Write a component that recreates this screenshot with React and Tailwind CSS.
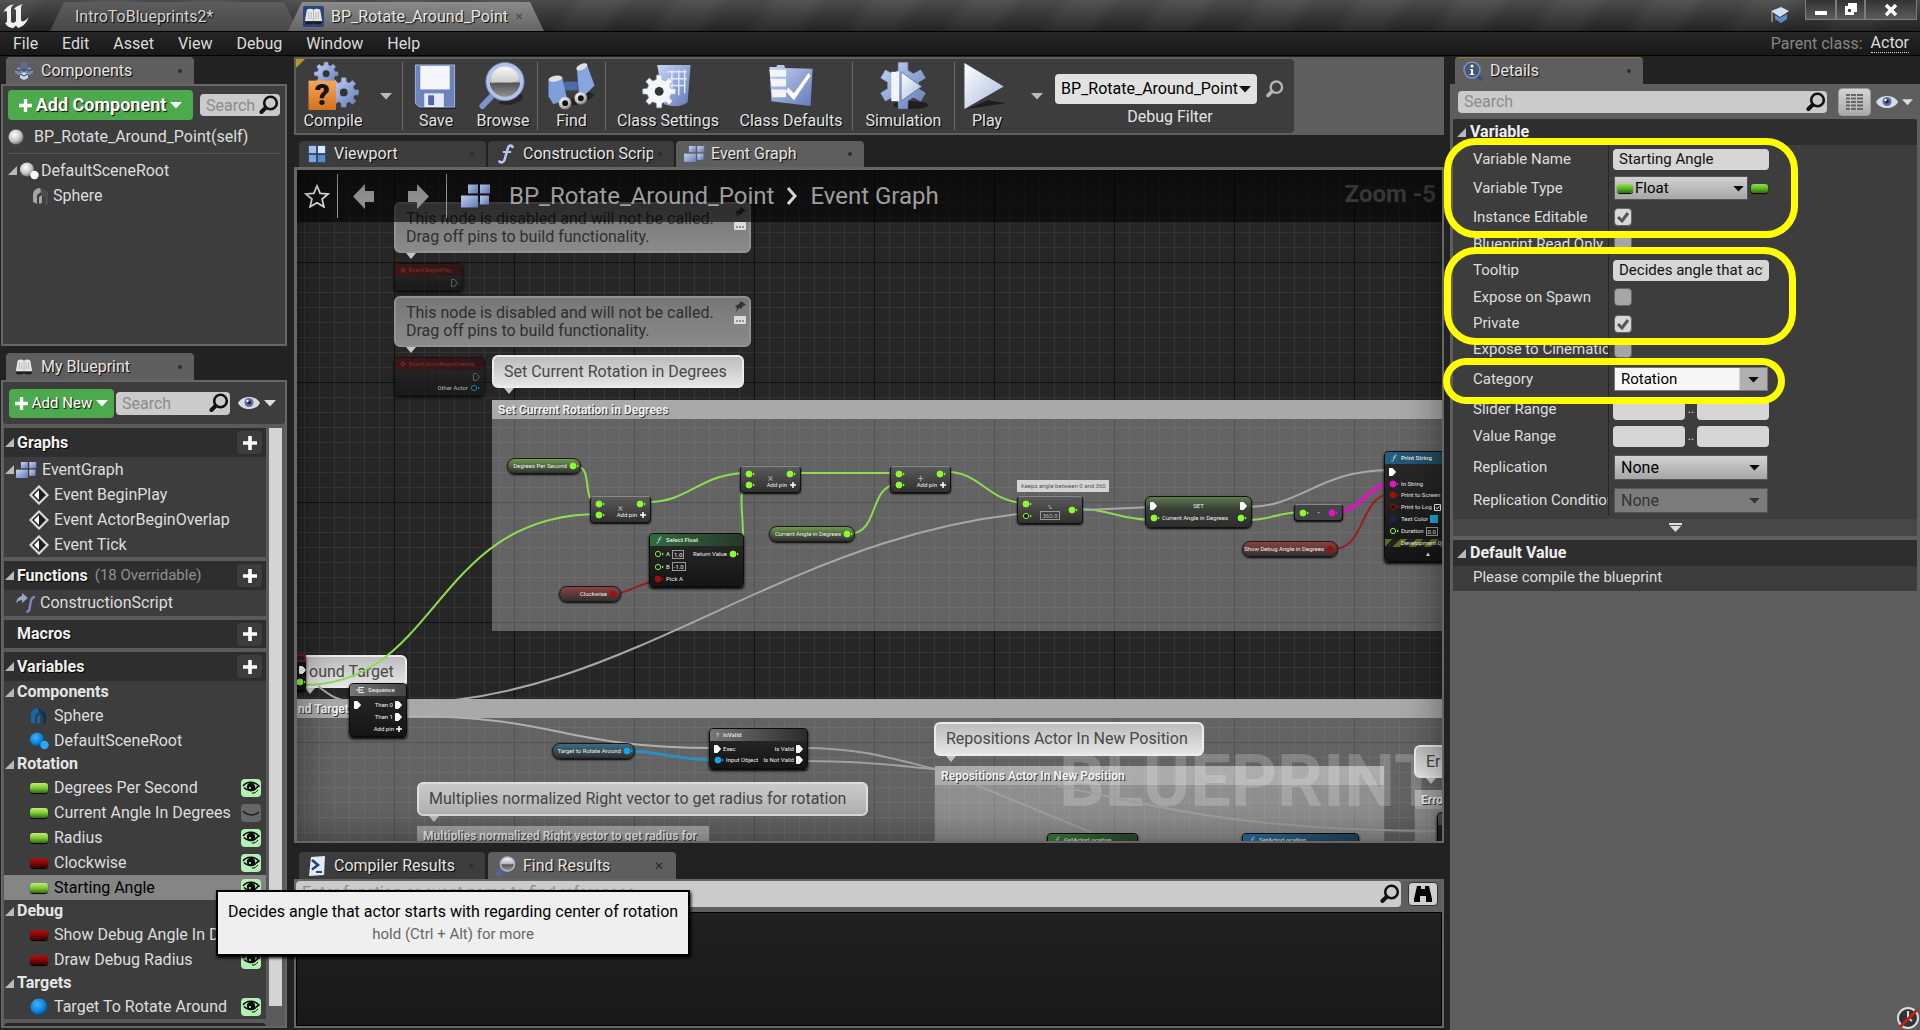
import React from "react";

/* ---------- small glyphs ---------- */

function Magnifier({ className = "size-6", stroke = "#111" }) {
  return (
    <svg viewBox="0 0 22 22" className={className} fill="none" stroke={stroke} aria-hidden="true">
      <circle cx="12.5" cy="9" r="6.3" strokeWidth="2.6" />
      <path d="M7.6 13.8 3.4 18" strokeWidth="4" strokeLinecap="round" />
    </svg>
  );
}

function Caret({ className = "w-3 h-2", fill = "#ddd" }) {
  return (
    <svg viewBox="0 0 12 8" className={className} aria-hidden="true">
      <path d="M0 1h12L6 7.5z" fill={fill} />
    </svg>
  );
}

function Fold() {
  return (
    <svg viewBox="0 0 9 9" className="size-[9px] shrink-0" aria-hidden="true">
      <path d="M9 0v9H0z" fill="#b9b9b9" />
    </svg>
  );
}

function Plus({ className = "size-4", fill = "#fff" }) {
  return (
    <svg viewBox="0 0 14 14" className={className} aria-hidden="true">
      <path d="M5.2 0h3.6v5.2H14v3.6H8.8V14H5.2V8.8H0V5.2h5.2z" fill={fill} />
    </svg>
  );
}

function gearPath(cx, cy, outer, inner, teeth) {
  const step = (Math.PI * 2) / teeth;
  let d = "";
  for (let i = 0; i < teeth; i++) {
    const a = i * step - Math.PI / 2;
    [[-0.3, inner], [-0.19, outer], [0.19, outer], [0.3, inner]].forEach(([k, r], j) => {
      const x = (cx + Math.cos(a + k * step) * r).toFixed(2);
      const y = (cy + Math.sin(a + k * step) * r).toFixed(2);
      d += (i === 0 && j === 0 ? "M" : "L") + x + " " + y;
    });
  }
  return d + "Z";
}

function Gear({ cx, cy, outer, inner, hole, teeth = 8, fill, holeFill = "#333" }) {
  return (
    <g>
      <path d={gearPath(cx, cy, outer, inner, teeth)} fill={fill} stroke="#8fa3d0" strokeWidth=".6" />
      <circle cx={cx} cy={cy} r={hole} fill={holeFill} />
    </g>
  );
}

function Defs() {
  return (
    <svg width="0" height="0" className="absolute" aria-hidden="true">
      <defs>
        <linearGradient id="blue" x1="0" y1="0" x2="1" y2="1">
          <stop offset="0" stopColor="#c6d6f6" />
          <stop offset="1" stopColor="#6279b8" />
        </linearGradient>
        <linearGradient id="pale" x1="0" y1="0" x2="1" y2="1">
          <stop offset="0" stopColor="#ffffff" />
          <stop offset="1" stopColor="#a9b8dc" />
        </linearGradient>
        <linearGradient id="orange" x1="0" y1="0" x2="0" y2="1">
          <stop offset="0" stopColor="#f7a758" />
          <stop offset="1" stopColor="#d4701d" />
        </linearGradient>
        <radialGradient id="ball" cx=".4" cy=".35" r=".7">
          <stop offset="0" stopColor="#ffffff" />
          <stop offset=".6" stopColor="#c4c4c4" />
          <stop offset="1" stopColor="#666" />
        </radialGradient>
        <radialGradient id="cyanBall" cx=".4" cy=".35" r=".7">
          <stop offset="0" stopColor="#3cb4ff" />
          <stop offset=".6" stopColor="#0c84dc" />
          <stop offset="1" stopColor="#06406f" />
        </radialGradient>
        <linearGradient id="lens" x1="0" y1="0" x2="0" y2="1">
          <stop offset="0" stopColor="#fff" />
          <stop offset=".5" stopColor="#b5b5b5" />
          <stop offset=".55" stopColor="#555" />
          <stop offset="1" stopColor="#999" />
        </linearGradient>
      </defs>
    </svg>
  );
}

function Logo() {
  return (
    <svg viewBox="0 0 28 26" className="w-7 h-[26px]" aria-hidden="true">
      <path d="M1 10C3 5 7 2 12 1.500 9.500 3 9 4.500 9 6.500v11c0 1.500.8 2.300 2 2.300s2-.6 3-1.500V8c0-1.500-.7-2-2-2 2-2.500 5-4.200 9-4.800-1.500 1-2 2-2 3.800v11.500c0 1.300.5 1.900 1.500 1.900 1.800 0 4-1.500 6-4.400-1 5-5 9.500-10.500 11l-2-2.500-3 2.700C6 24.500 3.500 21.500 3.200 20c1.300-.2 1.800-1 1.800-2.500V9.800C5 8.500 4.300 8 3.300 8 2.500 8 1.700 8.700 1 10z" fill="#f2f2f2" />
    </svg>
  );
}

function GridIcon({ className = "w-5 h-4" }) {
  return (
    <svg viewBox="0 0 30 23" className={className} aria-hidden="true">
      <rect x="7" y="0" width="10" height="9" fill="url(#blue)" />
      <rect x="19" y="0" width="10" height="9" fill="url(#blue)" />
      <rect x="0" y="11" width="17" height="12" fill="url(#blue)" />
      <rect x="19" y="11" width="9" height="9" fill="url(#blue)" />
    </svg>
  );
}

function ViewportIcon() {
  return (
    <svg viewBox="0 0 20 20" className="size-[18px]" aria-hidden="true">
      <rect x="0" y="0" width="20" height="20" rx="1" fill="#28466e" />
      <rect x="1" y="1" width="8" height="8" fill="#a9bfe4" />
      <rect x="11" y="1" width="8" height="8" fill="#dbe9fb" />
      <rect x="1" y="11" width="8" height="8" fill="#7fa4d6" />
      <rect x="11" y="11" width="8" height="8" fill="#5b88c6" />
    </svg>
  );
}

function FuncIcon({ className = "w-4 h-5", stroke = "#b7c6ef" }) {
  return (
    <svg viewBox="0 0 16 20" className={className} fill="none" stroke={stroke} strokeLinecap="round" aria-hidden="true">
      <path d="M14.500 3c-.8-2-3.600-2-4.500.8L6.500 16c-.8 2.600-3.500 3-5 1.500" strokeWidth="2.600" />
      <path d="M5.500 8h7" strokeWidth="1.800" />
    </svg>
  );
}

function BookIcon({ className = "w-5 h-5", bg = "none" }) {
  return (
    <svg viewBox="0 0 22 22" className={className} aria-hidden="true">
      <rect width="22" height="22" rx="2" fill={bg} />
      <path d="M4 4c2-1.500 5-1.500 7 0 2-1.500 5-1.500 7 0l2 12H2z" fill="#e8e8e8" />
      <path d="M11 4v12M6 6v8M8.500 6v8M13.500 6v8M16 6v8" stroke="#b3b3b3" />
      <path d="M2 16h18l-1 3h-6l-2-1-2 1H3z" fill="#1c1c1c" />
    </svg>
  );
}

function ComponentsIcon() {
  return (
    <svg viewBox="0 0 20 20" className="size-5" aria-hidden="true">
      <rect x="7" y="1" width="6" height="6" rx="1" fill="#5c6f93" />
      <path d="M1 8l4-2 4 2v4l-4 2-4-2zM11 8l4-2 4 2v4l-4 2-4-2z" fill="#7489ae" />
      <path d="M6 13l4-2 4 2v4l-4 2-4-2z" fill="#c9d8ee" />
      <path d="M1 8l4 2 4-2M11 8l4 2 4-2M6 13l4 2 4-2" stroke="#2c3648" fill="none" />
    </svg>
  );
}

function InfoIcon() {
  return (
    <svg viewBox="0 0 20 20" className="size-5" aria-hidden="true">
      <path d="M13 13l6 6" stroke="#35517f" strokeWidth="4" />
      <circle cx="9" cy="9" r="8" fill="#46577a" stroke="#8394b8" strokeWidth="1.500" />
      <circle cx="9" cy="5" r="1.500" fill="#fff" />
      <path d="M7 8h3v5h1.500v1h-5v-1H8V9H7z" fill="#fff" />
    </svg>
  );
}

function EyeIcon() {
  return (
    <svg viewBox="0 0 22 14" className="w-[22px] h-[14px]" aria-hidden="true">
      <path d="M0 7C4-1 18-1 22 7 18 15 4 15 0 7z" fill="#d8dae4" />
      <circle cx="11" cy="6.500" r="4.500" fill="#5a6ea6" />
      <circle cx="11" cy="6.500" r="2" fill="#1c2748" />
      <circle cx="9.500" cy="5" r="1.200" fill="#fff" />
    </svg>
  );
}

function LensIcon() {
  return (
    <svg viewBox="0 0 20 20" className="size-5" aria-hidden="true">
      <path d="M6 14l-4 4" stroke="#54679c" strokeWidth="4" strokeLinecap="round" />
      <circle cx="11.500" cy="8" r="7" fill="url(#lens)" stroke="#a8b6d6" strokeWidth="1.600" />
    </svg>
  );
}

function ConsoleIcon() {
  return (
    <svg viewBox="0 0 18 20" className="w-[18px] h-5" aria-hidden="true">
      <path d="M3 1l14-1-1 19-15 1z" fill="#e2ebfa" />
      <path d="M4 4l6 5-6 4.500" stroke="#23457f" strokeWidth="2.600" fill="none" />
      <path d="M8 16h6" stroke="#23457f" strokeWidth="2" />
    </svg>
  );
}

function HouseIcon({ fill = "#a5a5a5", dark = "#4b4b4b" }) {
  return (
    <svg viewBox="0 0 18 18" className="size-[18px]" aria-hidden="true">
      <path d="M1 8c0-4 3-7 7-7l8 5v10l-3 2V9L9 5 5 8v9l-4-2z" fill={fill} />
      <path d="M8 1l8 5v10l-3 2V9L9 5z" fill={dark} />
      <path d="M7 10l3-2v8l-3 1z" fill={fill} />
    </svg>
  );
}

function SceneRootIcon({ ball = "url(#ball)", small = "#fff" }) {
  return (
    <svg viewBox="0 0 20 18" className="w-5 h-[18px]" aria-hidden="true">
      <circle cx="8" cy="7.500" r="7" fill={ball} />
      <circle cx="15.500" cy="13" r="4.200" fill={small} />
    </svg>
  );
}

function EventIcon() {
  return (
    <svg viewBox="0 0 20 20" className="size-5" aria-hidden="true">
      <path d="M10 1.500 18.500 10 10 18.500 1.500 10z" fill="#1d1d1d" stroke="#d9d9d9" strokeWidth="2.200" />
      <path d="M10 5 5 10l5 5z" fill="#fff" />
    </svg>
  );
}

function OverrideIcon() {
  return (
    <svg viewBox="0 0 20 20" className="size-5" aria-hidden="true">
      <path d="M0 10c1-5 4-7 6-7V0l6 5-6 5V7C4 7 2 8 0 10z" fill="#9aa6c6" />
      <path d="M19 4c-3 0-4 2-4.500 6l-1 6c-.3 2-1.500 3-3 2.500" stroke="#7f83c9" strokeWidth="2.400" fill="none" />
    </svg>
  );
}

function Pill({ tone, className = "w-[18px] h-[10px]" }) {
  const tones = {
    green: "from-[#c0f070] via-[#7fc832] to-[#2f6d0c]",
    red: "from-[#a51414] via-[#8a0505] to-[#3a0000]",
    float: "from-[#8fe04a] via-[#5cb822] to-[#2c7010]",
  };
  return <span className={`block shrink-0 rounded-[3px] bg-linear-to-b shadow-[0_1px_1px_#000] ${tones[tone]} ${className}`} />;
}

function EyeBadge({ open }) {
  return (
    <button aria-label={open ? "Visible" : "Hidden"} aria-pressed={open} className={`flex h-[18px] w-5 shrink-0 items-center justify-center rounded-sm ${open ? "bg-[#b4f0b4]" : "bg-[#666]"}`}>
      <svg viewBox="0 0 18 14" className="h-[14px] w-[18px]" aria-hidden="true">
        {open ? (
          <>
            <path d="M1 5C5 0 12 0 17 5c-1 .3-1.500 1-2.500 1.800C11 11 5 10 2 6.500" fill="none" stroke="#0a0a0a" strokeWidth="1.500" />
            <circle cx="9" cy="6" r="4.200" fill="#0a0a0a" />
            <circle cx="8" cy="7" r="1.100" fill="#b4f0b4" />
            <path d="M10 12c3 .5 4-1 6-3" stroke="#0a0a0a" fill="none" />
          </>
        ) : (
          <path d="M1 5c4 5 12 5 16 1" stroke="#222" strokeWidth="1.600" fill="none" />
        )}
      </svg>
    </button>
  );
}

/* ---------- toolbar pictures ---------- */

const ToolArt = {
  compile: (
    <>
      <Gear cx={18} cy={12} outer={12} inner={9} hole={3.5} fill="url(#blue)" />
      <Gear cx={36} cy={31} outer={15} inner={11} hole={4} fill="url(#blue)" />
      <rect x="0" y="19" width="28" height="30" fill="url(#orange)" />
      <text x="14" y="44" textAnchor="middle" fontSize="30" fontWeight="900" fontFamily="Roboto, sans-serif" fill="#111">?</text>
    </>
  ),
  save: (
    <>
      <path d="M6 46h38l2 2H10z" fill="#111" opacity=".6" />
      <path d="M4 3h40v43H8l-4-4z" fill="#6d83bd" stroke="#9db0de" />
      <rect x="9" y="4" width="30" height="24" fill="#f4f6fb" />
      <rect x="13" y="32" width="20" height="14" fill="#e6ebf5" />
      <rect x="17" y="34" width="6" height="10" fill="#536aa8" />
    </>
  ),
  browse: (
    <>
      <path d="M20 42c10 4 22 0 26-6l-6-8z" fill="#111" opacity=".5" />
      <path d="M17 31 4 45" stroke="#7c93cd" strokeWidth="6" strokeLinecap="round" />
      <circle cx="27" cy="20" r="17.500" fill="url(#lens)" stroke="#b3c3e8" strokeWidth="4" />
      <circle cx="27" cy="20" r="19.500" fill="none" stroke="#6c81b6" strokeWidth="1" />
      <path d="M13 22a14 14 0 0 1 28-4c-8 6-20 1-28 4z" fill="#fff" opacity=".35" />
    </>
  ),
  find: (
    <>
      <path d="M14 42c10 6 26 0 34-8l-6-4z" fill="#111" opacity=".6" />
      <path d="M17 20h14v9H17z" fill="#4b6aa6" />
      <path d="M1 18l14-3 5 23-14 5-5-8z" fill="#7f9fdb" />
      <path d="M30 7l10-5 8 22-10 10-6-2z" fill="#86a6e0" />
      <ellipse cx="8" cy="17" rx="7" ry="3" fill="#e3e0e4" transform="rotate(-10 8 17)" />
      <ellipse cx="35" cy="5" rx="6" ry="3" fill="#e3e0e4" transform="rotate(-25 35 5)" />
      <circle cx="18" cy="42" r="6.500" fill="url(#ball)" />
      <circle cx="34" cy="37" r="6.500" fill="url(#ball)" />
      <circle cx="18" cy="42" r="3" fill="#111" />
      <circle cx="34" cy="37" r="3" fill="#111" />
    </>
  ),
  settings: (
    <>
      <path d="M14 3h34l-3 38c-6 5-16 5-24 2z" fill="url(#blue)" />
      <path d="M24 10h20M24 17h20M23 24h20M29 8v24M36 8v26M42 8v24" stroke="#dfe8fa" strokeWidth="1.500" />
      <Gear cx={16} cy={30} outer={17} inner={12.5} hole={4.5} fill="#f5f6fa" />
    </>
  ),
  defaults: (
    <>
      <path d="M3 5h7l1-2h7l1 3 28 1-2 38L5 40z" fill="url(#blue)" />
      <path d="M3 8h17v7H4zM4 17h16v8H5zM5 28h15v8H6z" fill="#f1f3f8" />
      <path d="M22 26l6 6L43 11l2 3-17 25-8-9z" fill="#fff" />
    </>
  ),
  simulation: (
    <>
      <ellipse cx="32" cy="44" rx="18" ry="4" fill="#111" opacity=".7" />
      <Gear cx={24} cy={24} outer={24} inner={16} hole={1} teeth={6} fill="url(#blue)" />
      <path d="M12 10h8v30h-8z" fill="#f1f4fb" />
      <path d="M22 10l21 15-21 15z" fill="url(#pale)" stroke="#5f76b0" />
    </>
  ),
  play: (
    <>
      <path d="M4 48l22-9 18 3z" fill="#111" opacity=".7" />
      <path d="M2 1l40 24L2 48z" fill="url(#pale)" />
    </>
  ),
};

function ToolButton({ art, label, className }) {
  return (
    <button className={`flex h-full flex-col items-center pt-[3px] ${className}`}>
      <svg viewBox="0 0 50 50" className="h-[49px] w-[50px] overflow-visible" aria-hidden="true">{ToolArt[art]}</svg>
      <span className="whitespace-nowrap leading-5 [text-shadow:1px_1px_0_#000]">{label}</span>
    </button>
  );
}

function Rule() {
  return <span className="my-[3px] w-px shrink-0 bg-[#6a6a6a]" />;
}

/* ---------- panels ---------- */

function Tab({ icon, label, active = true, close, h = "h-[27px]", className }) {
  return (
    <button role="tab" aria-selected={active} className={`flex min-w-0 items-center gap-[5px] rounded-t pl-1.5 pr-3 text-[#e6e6e6] ${h} ${active ? "bg-[#5e5e5e]" : "bg-[#3c3c3c]"} ${className}`}>
      <span className="flex w-6 shrink-0 justify-center">{icon}</span>
      <span className="flex-1 overflow-hidden whitespace-nowrap text-left [text-shadow:1px_1px_1px_#000]">{label}</span>
      {close ? <span className="text-xs text-[#2b2b2b]">✕</span> : <span className="size-1 shrink-0 rounded-full bg-[#2e2e2e]" />}
    </button>
  );
}

function SearchBox({ id, label = "Search", className, inputClass = "" }) {
  return (
    <div className={`flex items-center rounded-sm bg-[#cbcbcb] ${className}`}>
      <input id={id} aria-label={label} placeholder={label} className={`h-full w-0 min-w-0 flex-1 bg-transparent pl-1.5 text-[#222] outline-none placeholder:text-[#8c8c8c] ${inputClass}`} />
      <Magnifier className="size-[22px] shrink-0" />
    </div>
  );
}

function ComponentsPanel() {
  return (
    <section className="flex flex-col">
      <div role="tablist" className="flex pl-1.5">
        <Tab icon={<ComponentsIcon />} label="Components" className="w-[188px]" />
      </div>
      <div className="ml-px mr-px h-[262px] border-2 border-[#666] bg-[#3d3d3d] px-[5px] pt-1">
        <div className="flex items-center gap-[7px]">
          <button className="flex h-[30px] w-[185px] items-center justify-center gap-1 rounded-sm bg-[#4caa4c] text-lg font-bold text-white [text-shadow:1px_1px_1px_#000]">
            <Plus className="size-[13px]" />Add Component<Caret className="h-2 w-3" fill="#fff" />
          </button>
          <SearchBox id="component-search" className="h-[22px] w-20" />
        </div>
        <div className="mt-[5px] flex h-6 items-center gap-2.5">
          <svg viewBox="0 0 16 16" className="size-4" aria-hidden="true"><circle cx="8" cy="8" r="7.500" fill="url(#ball)" /></svg>
          BP_Rotate_Around_Point(self)
        </div>
        <hr className="my-1 border-[#555]" />
        <div className="flex h-[25px] items-center gap-[2px]"><Fold /><SceneRootIcon />DefaultSceneRoot</div>
        <div className="flex h-[25px] items-center gap-[3px] pl-6"><HouseIcon />Sphere</div>
      </div>
    </section>
  );
}

function GroupHeader({ title, note, fold = true, h = "h-[29px]" }) {
  return (
    <div className={`flex shrink-0 items-center gap-[3px] bg-[#2e2e2e] pl-px pr-1 text-[#f0f0f0] ${h}`}>
      {fold ? <Fold /> : <span className="w-[9px]" />}
      <span className="font-bold [text-shadow:1px_1px_1px_#000]">{title}</span>
      {note && <span className="ml-1 text-[15px] text-[#909090]">{note}</span>}
      <button aria-label={`Add to ${title}`} className="ml-auto flex h-[23px] w-[25px] items-center justify-center rounded-sm bg-[#3d3d3d]"><Plus className="size-[14px]" /></button>
    </div>
  );
}

function VarGroup({ title }) {
  return (
    <div className="flex h-[22px] items-center gap-[3px] pl-px">
      <Fold /><span className="font-bold text-[#e6e6e6]">{title}</span>
    </div>
  );
}

function Leaf({ icon, label, eye, selected }) {
  return (
    <div className={`flex h-[25px] items-center gap-[5px] pl-[25px] pr-[5px] ${selected ? "bg-[#858585] text-black" : ""}`}>
      <span className="flex w-5 shrink-0 justify-center">{icon}</span>
      <span className="flex-1 overflow-hidden whitespace-nowrap">{label}</span>
      {eye && <EyeBadge open={eye === "open"} />}
    </div>
  );
}

function MyBlueprintPanel() {
  return (
    <section className="mt-[7px] flex min-h-0 flex-1 flex-col pb-[2px]">
      <div role="tablist" className="flex pl-1.5">
        <Tab icon={<BookIcon />} label="My Blueprint" className="w-[188px]" />
      </div>
      <div className="ml-px mr-px flex min-h-0 flex-1 flex-col border-2 border-[#666] bg-[#5a5a5a]">
        <div className="flex h-[42px] shrink-0 items-center rounded-b bg-[#3d3d3d] pl-1.5">
          <button className="flex h-[29px] w-[105px] items-center justify-center gap-1 rounded-sm bg-[#4caa4c] text-[15px] text-white [text-shadow:1px_1px_1px_#000]">
            <Plus className="size-[13px]" />Add New<Caret className="h-2 w-3" fill="#fff" />
          </button>
          <SearchBox id="blueprint-search" className="ml-[2px] h-[23px] w-[114px]" />
          <button aria-label="View options" className="ml-2 flex items-center gap-1"><EyeIcon /><Caret className="h-2 w-3" /></button>
        </div>
        <div className="mt-1 flex min-h-0 flex-1 gap-[3px] pr-[3px]">
          <div className="flex min-w-0 flex-1 flex-col gap-1 overflow-hidden pl-px">
            <div className="bg-[#3d3d3d]">
              <GroupHeader title="Graphs" />
              <div className="flex h-[25px] items-center gap-[2px] pl-px"><Fold /><GridIcon className="h-4 w-[21px]" /><span className="ml-[3px]">EventGraph</span></div>
              <Leaf icon={<EventIcon />} label="Event BeginPlay" />
              <Leaf icon={<EventIcon />} label="Event ActorBeginOverlap" />
              <Leaf icon={<EventIcon />} label="Event Tick" />
            </div>
            <div className="bg-[#3d3d3d]">
              <GroupHeader title="Functions" note="(18 Overridable)" />
              <div className="flex h-[26px] items-center gap-1 pl-3"><OverrideIcon />ConstructionScript</div>
            </div>
            <GroupHeader title="Macros" fold={false} h="h-7" />
            <div className="bg-[#3d3d3d]">
              <GroupHeader title="Variables" />
              <VarGroup title="Components" />
              <Leaf icon={<HouseIcon fill="#0f6ba5" dark="#0b3454" />} label="Sphere" />
              <Leaf icon={<SceneRootIcon ball="url(#cyanBall)" small="#2aa8f5" />} label="DefaultSceneRoot" />
              <VarGroup title="Rotation" />
              <Leaf icon={<Pill tone="green" />} label="Degrees Per Second" eye="open" />
              <Leaf icon={<Pill tone="green" />} label="Current Angle In Degrees" eye="closed" />
              <Leaf icon={<Pill tone="green" />} label="Radius" eye="open" />
              <Leaf icon={<Pill tone="red" />} label="Clockwise" eye="open" />
              <Leaf icon={<Pill tone="green" />} label="Starting Angle" eye="open" selected />
              <VarGroup title="Debug" />
              <Leaf icon={<Pill tone="red" />} label="Show Debug Angle In Degrees" eye="open" />
              <Leaf icon={<Pill tone="red" />} label="Draw Debug Radius" eye="open" />
              <VarGroup title="Targets" />
              <Leaf icon={<svg viewBox="0 0 18 18" className="size-[18px]" aria-hidden="true"><circle cx="9" cy="9" r="8.500" fill="url(#cyanBall)" /></svg>} label="Target To Rotate Around" eye="open" />
            </div>
            <div className="h-[6px] shrink-0 rounded-t bg-[#262626]" />
          </div>
          <div className="mb-[20px] w-[13px] bg-[#d4d4d4]" />
        </div>
      </div>
    </section>
  );
}

function Toolbar() {
  return (
    <div className="flex h-[78px] border-2 border-r-0 border-[#5e5e5e] bg-[#5e5e5e]">
      <div className="flex rounded-r bg-[#3d3d3d] pr-[9px] text-[#e4e4e4]">
        <div className="relative flex">
          <svg viewBox="0 0 10 10" className="absolute left-0 top-0 size-[9px]" aria-hidden="true"><path d="M0 0h10L0 10z" fill="#b8962c" /></svg>
          <ToolButton art="compile" label="Compile" className="w-[74px]" />
          <button aria-label="Compile options" className="flex w-8 items-center justify-center"><Caret className="h-2 w-3" fill="#bbb" /></button>
        </div>
        <Rule />
        <ToolButton art="save" label="Save" className="w-[66px]" />
        <ToolButton art="browse" label="Browse" className="w-[68px]" />
        <Rule />
        <ToolButton art="find" label="Find" className="w-[67px]" />
        <Rule />
        <ToolButton art="settings" label="Class Settings" className="w-[124px]" />
        <ToolButton art="defaults" label="Class Defaults" className="w-[122px]" />
        <Rule />
        <ToolButton art="simulation" label="Simulation" className="w-[101px]" />
        <Rule />
        <ToolButton art="play" label="Play" className="w-[64px]" />
        <button aria-label="Play options" className="flex w-[36px] items-center justify-center"><Caret className="h-2 w-3" fill="#bbb" /></button>
        <div className="flex flex-col items-center pt-[15px]">
          <div className="flex items-center gap-2">
            <span className="relative flex items-center">
              <select id="debug-filter" className="h-[30px] w-[202px] appearance-none rounded-sm bg-[#e2e2e2] pl-1.5 text-black">
                <option>BP_Rotate_Around_Point</option>
              </select>
              <Caret className="pointer-events-none absolute right-1.5 h-2 w-3" fill="#111" />
            </span>
            <button aria-label="Locate"><Magnifier className="size-5" stroke="#b5b5b5" /></button>
          </div>
          <label htmlFor="debug-filter" className="mt-[3px] leading-5">Debug Filter</label>
        </div>
      </div>
    </div>
  );
}

/* ---------- graph ---------- */

const pinFill = { green: "#8dfb2f", red: "#a00f0f", pink: "#e312c4", blue: "#15a4e8", dark: "#1b2450" };

function Pin({ tone = "green", hollow }) {
  return (
    <svg viewBox="0 0 10 8" className="h-2 w-2.5 shrink-0" aria-hidden="true">
      <circle cx="4" cy="4" r={hollow ? 2.6 : 3} fill={hollow ? "#111" : pinFill[tone]} stroke={pinFill[tone]} />
      <path d="M8 2.600 9.800 4 8 5.400z" fill={pinFill[tone]} />
    </svg>
  );
}

function Exec({ hollow }) {
  return (
    <svg viewBox="0 0 7 8" className="h-2 w-[7px] shrink-0" aria-hidden="true">
      <path d="M.5.500h3L6.500 4 3.500 7.500h-3z" fill={hollow ? "none" : "#fff"} stroke={hollow ? "#777" : "#fff"} />
    </svg>
  );
}

function VarNode({ label, tone = "green", glow, className }) {
  return (
    <div className={`absolute flex h-4 items-center justify-end gap-[2px] whitespace-nowrap rounded-lg border border-[#1a1a1a] bg-linear-to-b pr-px shadow-[0_1px_2px_#000] ${glow} to-[#303030] ${className}`}>
      {label}<Pin tone={tone} />
    </div>
  );
}

function MathNode({ sign, className }) {
  return (
    <div className={`absolute flex h-[27px] w-[61px] flex-col justify-between rounded border border-[#111] border-t-[#888] bg-linear-to-b from-[#5a5a5a] to-[#303030] px-1 py-[3px] shadow-[0_1px_2px_#000] ${className}`}>
      <div className="flex justify-between"><Pin /><span className="-mb-1 pt-1 text-[10px] leading-[10px] text-[#aaa]">{sign}</span><Pin /></div>
      <div className="flex items-center justify-between"><Pin /><span className="flex items-center gap-[3px] whitespace-nowrap">Add pin<Plus className="size-1.5" /></span></div>
    </div>
  );
}

function Card({ title, icon, head, className, children }) {
  return (
    <div className={`absolute flex flex-col overflow-hidden rounded border border-[#0c0c0c] bg-linear-to-b from-[#2b2b2b] to-[#151515] shadow-[0_2px_3px_#000] ${className}`}>
      <div className={`flex h-3 shrink-0 items-center gap-1 bg-linear-to-r px-1.5 font-bold text-[#ddd] ${head}`}>{icon}{title}</div>
      <div className="flex flex-1 flex-col justify-evenly px-1">{children}</div>
    </div>
  );
}

function TinyFunc() {
  return <FuncIcon className="h-2 w-1.5" />;
}

function PinRow({ left, right }) {
  return (
    <div className="flex items-center justify-between whitespace-nowrap">
      <span className="flex items-center gap-[2px]">{left}</span>
      <span className="flex items-center gap-[2px]">{right}</span>
    </div>
  );
}

function Value({ children }) {
  return <span className="border border-[#999] px-px leading-[7px]">{children}</span>;
}

function Bubble({ className, tone = "from-[#c9c9c9] to-[#b5b5b5] text-[#444] border-[#dedede]", children }) {
  return (
    <div className={`absolute whitespace-nowrap rounded-md border-2 bg-linear-to-b px-2.5 text-base ${tone} ${className}`}>
      {children}
      <svg viewBox="0 0 10 6" className="absolute left-2.5 top-full mt-0.5 h-1.5 w-2.5" aria-hidden="true"><path d="M0 0h10L5 6z" fill="#c4c4c4" /></svg>
    </div>
  );
}

function DisabledNote({ className }) {
  return (
    <Bubble tone="from-[#777] to-[#8a8a8a] border-[#929292] text-[#2f2f2f]" className={`h-[51px] w-[357px] pt-[6px] leading-[18px] ${className}`}>
      This node is disabled and will not be called.<br />Drag off pins to build functionality.
      <svg viewBox="0 0 12 26" className="absolute right-[3px] top-[3px] h-[26px] w-3" aria-hidden="true">
        <path d="M7 0l5 4-3 1-2 3-2-1-3 4 1-4-2-2 4-2z" fill="#333" />
        <rect x="0" y="15" width="12" height="8" rx="1" fill="#ddd" />
        <path d="M2 20h2M5 20h2M8 20h2" stroke="#444" />
      </svg>
    </Bubble>
  );
}

const brightBubble = "from-[#bdbdbd] to-[#e6e6e6] border-[#ececec] text-[#484848]";

function Comment({ title, className, head = "bg-[#a9a9a9]", pad = "pl-1.5" }) {
  return (
    <div className={`absolute bg-white/28 ${className}`}>
      <div className={`h-[19px] overflow-hidden whitespace-nowrap text-xs font-bold leading-5 text-[#f0f0f0] [text-shadow:1px_1px_0_#333] ${pad} ${head}`}>{title}</div>
    </div>
  );
}

function Wires() {
  const wire = [
    ["M575 466C595 466 580 503 598 503", "#8fdc50", 2],
    ["M297 685C440 690 430 515 598 514", "#8fdc50", 2],
    ["M648 502C690 502 700 473 748 473", "#8fdc50", 2],
    ["M741 552C748 530 734 488 748 484", "#8fdc50", 2],
    ["M798 473H898", "#8fdc50", 2],
    ["M850 534C880 532 868 486 898 484", "#8fdc50", 2],
    ["M948 472C980 472 990 503 1025 503", "#8fdc50", 2],
    ["M1080 509C1110 509 1120 520 1154 520", "#8fdc50", 2],
    ["M1248 520C1270 520 1280 512 1303 512", "#8fdc50", 2],
    ["M617 594C632 590 640 584 658 580", "#9b1c24", 2],
    ["M1334 549C1365 549 1360 496 1390 494", "#9b1c24", 2],
    ["M1339 512C1360 510 1370 485 1390 483", "#d01cb4", 4],
    ["M403 703C640 703 800 512 1083 510L1154 507", "#a8a8a8", 2],
    ["M1248 507C1300 507 1320 470 1390 470", "#a8a8a8", 2],
    ["M403 716C560 716 560 748 715 748", "#b0b0b0", 2],
    ["M803 748C860 748 890 758 935 769", "#a0a0a0", 2],
    ["M803 761C860 761 890 765 935 769", "#a0a0a0", 2],
    ["M976 785L1100 836", "#a0a0a0", 2],
    ["M1058 786C1180 812 1260 831 1441 831", "#a0a0a0", 2],
    ["M632 751C660 752 680 760 715 760", "#2a8fc4", 3],
    ["M318 686C330 696 340 702 356 702", "#a8a8a8", 2],
  ];
  return (
    <svg className="absolute inset-0 size-full" fill="none" aria-hidden="true">
      <g transform="translate(-297 -170)">
        {wire.map(([d, stroke, w]) => <path key={d} d={d} stroke={stroke} strokeWidth={w} />)}
      </g>
    </svg>
  );
}

function GraphCanvas() {
  return (
    <div className="relative flex-1 overflow-hidden border-2 border-l-[3px] border-t-[3px] border-[#666] bg-[#262626] text-[6px] leading-none text-[#eee]">
      <svg className="absolute inset-0 size-full" aria-hidden="true">
        <defs>
          <pattern id="minor" width="15" height="15" x="7" y="2" patternUnits="userSpaceOnUse"><path d="M.5 0v15M0 .5h15" stroke="#343434" /></pattern>
          <pattern id="major" width="120" height="120" x="97" y="92" patternUnits="userSpaceOnUse"><path d="M.5 0v120M0 .5h120" stroke="#101010" /></pattern>
        </defs>
        <rect width="100%" height="100%" fill="url(#minor)" />
        <rect width="100%" height="100%" fill="url(#major)" />
      </svg>

      <Comment title="Set Current Rotation in Degrees" className="left-[195px] right-0 top-[230px] h-[231px]" />
      <Comment title="nd Target" pad="pl-[5px]" className="-left-1 bottom-0 right-0 top-[529px]" />
      <Comment title="Multiplies normalized Right vector to get radius for" head="bg-white/20" className="bottom-0 left-[120px] top-[656px] w-[292px]" />
      <Comment title="Repositions Actor In New Position" head="bg-white/25" className="bottom-0 left-[638px] top-[596px] w-[449px]" />
      <Comment title="Error" head="bg-white/20" className="bottom-0 left-[1118px] right-0 top-[620px]" />
      <div className="absolute left-[762px] top-[576px] text-7xl font-bold leading-none text-white/20">BLUEPRINT</div>

      <Bubble tone={brightBubble} className="-left-1 top-[485px] h-[33px] w-[114px] pl-3.5 leading-[30px]">ound Target</Bubble>
      <Wires />

      <Card title="Event BeginPlay" icon={<span className="size-1 rotate-45 border border-[#a33]" />} head="from-[#4a1111] to-[#301010] !font-normal !text-[#a33]" className="left-[97px] top-[93px] h-[28px] w-[69px] opacity-70">
        <PinRow right={<Exec hollow />} />
      </Card>
      <Card title="Event ActorBeginOverlap" icon={<span className="size-1 shrink-0 rotate-45 border border-[#a33]" />} head="from-[#4a1111] to-[#301010] !font-normal !text-[#a33] whitespace-nowrap" className="left-[97px] top-[187px] h-[39px] w-[91px] opacity-70">
        <PinRow right={<Exec hollow />} />
        <PinRow right={<>Other Actor<Pin tone="blue" hollow /></>} />
      </Card>

      <VarNode label="Degrees Per Second" glow="from-[#6f9a50]" className="left-[210px] top-[288px] w-[74px]" />
      <MathNode sign="×" className="left-[293px] top-[326px]" />
      <MathNode sign="×" className="left-[443px] top-[296px]" />
      <MathNode sign="+" className="left-[593px] top-[296px]" />
      <Card title="Select Float" icon={<TinyFunc />} head="from-[#2f6b3c] to-[#26382a]" className="left-[352px] top-[363px] h-[54px] w-[95px]">
        <PinRow left={<><Pin hollow />A<Value>1.0</Value></>} right={<>Return Value<Pin /></>} />
        <PinRow left={<><Pin hollow />B<Value>-1.0</Value></>} />
        <PinRow left={<><Pin tone="red" />Pick A</>} />
      </Card>
      <VarNode label="Clockwise" tone="red" glow="from-[#8a4040]" className="left-[262px] top-[416px] w-[62px]" />
      <VarNode label="Current Angle in Degrees" glow="from-[#6f9a50]" className="left-[472px] top-[356px] w-[86px]" />

      <div className="absolute left-[720px] top-[310px] flex h-3 w-[92px] items-center whitespace-nowrap bg-[#d4d4d4] pl-1 text-[#555]">Keeps angle between 0 and 360</div>
      <div className="absolute left-[720px] top-[326px] flex h-7 w-[66px] items-center justify-between rounded border border-[#111] border-t-[#888] bg-linear-to-b from-[#5a5a5a] to-[#303030] px-1 shadow-[0_1px_2px_#000]">
        <span className="flex h-full flex-col justify-evenly"><Pin /><Pin hollow /></span>
        <span className="flex flex-col items-center gap-px pt-1 text-[#bbb]">%<Value>360.0</Value></span>
        <Pin />
      </div>
      <div className="absolute left-[848px] top-[326px] flex h-8 w-[107px] flex-col justify-evenly rounded-md border border-[#111] bg-linear-to-b from-[#5d7d48] via-[#3a3f38] via-40% to-[#2c2c2c] px-1 shadow-[0_1px_2px_#000]">
        <div className="flex items-center justify-between"><Exec />SET<Exec /></div>
        <PinRow left={<><Pin />Current Angle in Degrees</>} right={<Pin />} />
      </div>
      <div className="absolute left-[997px] top-[334px] flex h-[17px] w-[49px] items-center justify-between rounded border border-[#111] border-t-[#888] bg-[#444] px-1 shadow-[0_1px_2px_#000]"><Pin /><span>•</span><Pin tone="pink" /></div>
      <VarNode label="Show Debug Angle in Degrees" tone="red" glow="from-[#8a4040]" className="left-[945px] top-[371px] w-[96px]" />
      <Card title="Print String" icon={<TinyFunc />} head="from-[#23607f] to-[#1d3d50]" className="left-[1087px] top-[281px] h-[111px] w-[90px]">
        <PinRow left={<Exec />} />
        <PinRow left={<><Pin tone="pink" />In String</>} />
        <PinRow left={<><Pin tone="red" />Print to Screen</>} />
        <PinRow left={<><Pin tone="red" hollow />Print to Log<svg viewBox="0 0 7 7" className="size-[7px]" aria-hidden="true"><path d="M.5.5h6v6h-6zM2 3.500l1.200 1.500L5.500 2" stroke="#fff" fill="none" /></svg></>} />
        <PinRow left={<><Pin tone="dark" />Text Color<span className="size-2 bg-[#1ba9d8]" /></>} />
        <PinRow left={<><Pin hollow />Duration<Value>0.0</Value></>} />
        <div className="-mx-1 whitespace-nowrap bg-[repeating-linear-gradient(135deg,#5d6b1c_0_5px,#222_5px_11px)] py-px pl-4">Development Only</div>
        <span className="pl-9">▲</span>
      </Card>

      <div className="absolute -left-1 top-[484px] flex h-9 w-[13px] flex-col items-end justify-between rounded bg-[#151515] pb-1 shadow-[0_2px_3px_#000]">
        <span className="h-2 w-full border-2 border-[#7a1d1d] bg-[#222]" /><Exec /><Pin />
      </div>
      <Card title="Sequence" icon={<svg viewBox="0 0 8 6" className="h-1.5 w-2" aria-hidden="true"><path d="M0 3h3M3 0v6M3 .5h5M3 3h4M3 5.500h5" stroke="#eee" fill="none" /></svg>} head="from-[#777] to-[#444]" className="left-[52px] top-[513px] h-[54px] w-[58px]">
        <PinRow left={<Exec />} right={<>Then 0<Exec /></>} />
        <PinRow right={<>Then 1<Exec /></>} />
        <PinRow right={<>Add pin<Plus className="size-[6px]" /></>} />
      </Card>
      <VarNode label="Target to Rotate Around" tone="blue" glow="from-[#3a6c85]" className="left-[255px] top-[573px] w-[83px]" />
      <Card title="IsValid" icon={<span>?</span>} head="from-[#777] to-[#2b2b2b]" className="left-[412px] top-[558px] h-[41px] w-[99px]">
        <PinRow left={<><Exec />Exec</>} right={<>Is Valid<Exec /></>} />
        <PinRow left={<><Pin tone="blue" />Input Object</>} right={<>Is Not Valid<Exec /></>} />
      </Card>
      <Card title="GetActorLocation" icon={<TinyFunc />} head="from-[#3d7d3d] to-[#2c4a2c]" className="-bottom-2 left-[750px] h-4 w-[91px]" />
      <Card title="SetActorLocation" icon={<TinyFunc />} head="from-[#2873a5] to-[#234459]" className="-bottom-2 left-[945px] h-4 w-[117px]" />
      <Card title="" head="from-[#555] to-[#555]" className="left-[1140px] top-[642px] h-16 w-10" />

      <DisabledNote className="left-[97px] top-[32px]" />
      <DisabledNote className="left-[97px] top-[126px]" />
      <Bubble tone={brightBubble} className="left-[195px] top-[185px] h-[33px] w-[252px] leading-[30px]">Set Current Rotation in Degrees</Bubble>
      <Bubble className="left-[120px] top-[612px] h-[34px] w-[451px] leading-[30px]">Multiplies normalized Right vector to get radius for rotation</Bubble>
      <Bubble tone={brightBubble} className="left-[637px] top-[552px] h-[34px] w-[270px] leading-[30px]">Repositions Actor In New Position</Bubble>
      <Bubble tone={brightBubble} className="left-[1117px] top-[575px] h-[33px] w-[80px] leading-[30px]">Er</Bubble>

      <nav aria-label="Breadcrumb" className="absolute inset-x-0 top-0 flex h-[52px] items-center bg-black/60 pr-1.5 text-2xl text-[#a5a5a5]">
        <button aria-label="Favorite" className="flex w-10 justify-center">
          <svg viewBox="0 0 26 25" className="h-6 w-[26px]" aria-hidden="true"><path d="M13 2l3.300 7.700 8.200.7-6.200 5.400 1.900 8L13 19.500l-7.200 4.300 1.900-8L1.500 10.400l8.200-.7z" fill="none" stroke="#e6e6e6" strokeWidth="1.800" /></svg>
        </button>
        <span className="h-11 w-px bg-[#999]" />
        <button aria-label="Back" className="flex w-[52px] justify-center">
          <svg viewBox="0 0 22 25" className="h-[25px] w-[22px]" aria-hidden="true"><path d="M0 12.500 12 0v7h9v11h-9v7z" fill="#949494" /></svg>
        </button>
        <button aria-label="Forward" className="flex w-[56px] justify-center">
          <svg viewBox="0 0 22 25" className="h-[25px] w-[22px]" aria-hidden="true"><path d="M22 12.500 10 0v7H1v11h9v7z" fill="#949494" /></svg>
        </button>
        <span className="h-11 w-px bg-[#999]" />
        <GridIcon className="ml-3.5 h-6 w-[30px]" />
        <span className="ml-[18px]">BP_Rotate_Around_Point</span>
        <svg viewBox="0 0 12 18" className="mx-3 h-[18px] w-3" fill="none" aria-hidden="true"><path d="M2 1l7 8-7 8" stroke="#e0e0e0" strokeWidth="3" /></svg>
        <span>Event Graph</span>
        <span className="ml-auto pb-1 font-bold text-[#3a3a3a]">Zoom -5</span>
      </nav>
      <div className="pointer-events-none absolute inset-0 shadow-[inset_0_0_40px_rgba(0,0,0,.45)]" />
    </div>
  );
}

function FindResults() {
  return (
    <section className="mt-[9px] flex flex-col">
      <div role="tablist" className="flex gap-[3px] pl-[5px]">
        <Tab active={false} icon={<ConsoleIcon />} label="Compiler Results" className="w-[186px]" />
        <Tab icon={<LensIcon />} label="Find Results" close className="w-[188px]" />
      </div>
      <div className="flex h-[149px] flex-col border-2 border-[#666] bg-[#5e5e5e]">
        <div className="flex h-[31px] items-start gap-[7px] pr-1">
          <SearchBox id="find-search" label="Enter function or event name to find references..." className="h-[26px] flex-1" inputClass="pb-1" />
          <button aria-label="Find in blueprints" className="mt-px flex h-6 w-[30px] items-center justify-center rounded-sm border border-[#333] bg-[#cfcfcf]">
            <svg viewBox="0 0 18 18" className="size-[18px]" aria-hidden="true"><path d="M3 1h4v3h4V1h4l3 13v3h-6v-6H6v6H0v-3z" fill="#000" /></svg>
          </button>
        </div>
        <div className="flex-1 border border-black bg-linear-to-b from-[#202020] to-[#181818]" />
      </div>
    </section>
  );
}

/* ---------- details ---------- */

const fieldBg = "bg-linear-to-b from-[#d2d2d2] to-[#a6a6a6]";

function Row({ id, label, h = "h-[26px]", children }) {
  return (
    <div className={`flex items-center ${h}`}>
      <label htmlFor={id} className="flex h-full w-[156px] shrink-0 items-center overflow-hidden whitespace-nowrap border-r border-[#262626] pl-5 text-[15px]">{label}</label>
      <div className="flex items-center pl-1">{children}</div>
    </div>
  );
}

function Check({ id, on }) {
  return (
    <span className="relative ml-px flex size-[18px]">
      <input id={id} type="checkbox" defaultChecked={on} className="peer size-[18px] appearance-none rounded-sm border border-[#666] bg-[#a6a6a6] checked:bg-[#d8d8d8]" />
      <svg viewBox="0 0 18 18" className="pointer-events-none absolute inset-0 hidden size-[18px] peer-checked:block" aria-hidden="true"><path d="M4 9l4 4 6-8" fill="none" stroke="#555" strokeWidth="3" /></svg>
    </span>
  );
}

function Text({ id, label, value, className = "w-[156px]" }) {
  return <input id={id} aria-label={label} defaultValue={value} className={`h-[21px] rounded bg-[#d6d6d6] px-1.5 text-[15px] text-[#111] ${className}`} />;
}

function Pick({ id, value, disabled, h = "h-[25px]" }) {
  return (
    <span className="relative ml-px flex items-center">
      <select id={id} disabled={disabled} className={`w-[154px] appearance-none border border-[#555] pl-1.5 text-base ${h} ${disabled ? "bg-[#7c7c7c] text-[#333] opacity-100" : `${fieldBg} text-black`}`}>
        <option>{value}</option>
      </select>
      <Caret className="pointer-events-none absolute right-2 h-[7px] w-[11px]" fill={disabled ? "#333" : "#0a0a0a"} />
    </span>
  );
}

function SectionHead({ title }) {
  return (
    <div className="flex h-[26px] items-center gap-1 rounded-t bg-[#2e2e2e] pl-1 font-bold text-[#f0f0f0]"><Fold />{title}</div>
  );
}

function Details() {
  return (
    <aside className="relative flex w-[470px] shrink-0 flex-col">
      <div role="tablist" className="flex pl-[5px]">
        <Tab icon={<InfoIcon />} label="Details" className="w-[188px] border-t border-[#8d7440]" />
      </div>
      <div className="flex-1 bg-[#5e5e5e] px-[3px]">
        <div className="flex h-[35px] items-center pl-[5px] pr-1">
          <SearchBox id="details-search" className="h-[22px] flex-1" />
          <button aria-label="Property matrix" className="ml-[11px] flex h-[28px] w-[33px] items-center justify-center rounded-sm border border-[#999] bg-linear-to-b from-[#d4d4d4] to-[#aaa]">
            <svg viewBox="0 0 17 18" className="h-[18px] w-[17px]" aria-hidden="true"><path d="M0 2h17M0 5.500h17M0 9h17M0 12.500h17M0 16h17" stroke="#666" strokeWidth="2" /><path d="M4.500 0v18M10.500 0v18" stroke="#c0c0c0" /></svg>
          </button>
          <button aria-label="View options" className="ml-[5px] flex items-center gap-1"><EyeIcon /><Caret className="h-2 w-[11px]" /></button>
        </div>
        <section className="bg-[#3d3d3d]">
          <SectionHead title="Variable" />
          <Row id="v-name" label="Variable Name" h="h-7"><Text id="v-name" value="Starting Angle" /></Row>
          <Row id="v-type" label="Variable Type" h="h-[30px]">
            <span className="relative ml-px flex items-center">
              <select id="v-type" className={`h-6 w-[134px] appearance-none border border-[#555] pl-5 text-[15px] text-black ${fieldBg}`}><option>Float</option></select>
              <span className="pointer-events-none absolute left-[3px]"><Pill tone="float" className="h-[9px] w-4" /></span>
              <Caret className="pointer-events-none absolute right-1 h-[7px] w-[11px]" fill="#0a0a0a" />
            </span>
            <span className="ml-[3px]"><Pill tone="float" className="h-[9px] w-[17px]" /></span>
          </Row>
          <Row id="v-inst" label="Instance Editable" h="h-7"><Check id="v-inst" on /></Row>
          <Row id="v-ro" label="Blueprint Read Only"><Check id="v-ro" /></Row>
          <Row id="v-tip" label="Tooltip"><Text id="v-tip" value="Decides angle that actor starts with regarding center of rotation" /></Row>
          <Row id="v-spawn" label="Expose on Spawn" h="h-7"><Check id="v-spawn" /></Row>
          <Row id="v-priv" label="Private" h="h-[25px]"><Check id="v-priv" on /></Row>
          <Row id="v-cine" label="Expose to Cinematics"><Check id="v-cine" /></Row>
          <Row id="v-cat" label="Category" h="h-[34px]">
            <span className="relative ml-px flex items-center">
              <select id="v-cat" className="h-6 w-[154px] appearance-none border border-[#777] bg-[linear-gradient(to_right,#f7f7f7_124px,#b0b0b0_125px)] pl-1.5 text-[15px] text-black"><option>Rotation</option></select>
              <Caret className="pointer-events-none absolute right-[9px] h-[7px] w-[11px]" fill="#0a0a0a" />
            </span>
          </Row>
          <Row id="v-slmin" label="Slider Range"><Text id="v-slmin" value="" className="w-[72px]" /><span className="w-3 text-center text-xs">..</span><Text id="v-slmax" label="Slider maximum" value="" className="w-[72px]" /></Row>
          <Row id="v-vmin" label="Value Range" h="h-7"><Text id="v-vmin" value="" className="w-[72px]" /><span className="w-3 text-center text-xs">..</span><Text id="v-vmax" label="Value maximum" value="" className="w-[72px]" /></Row>
          <Row id="v-rep" label="Replication" h="h-[34px]"><Pick id="v-rep" value="None" /></Row>
          <Row id="v-repc" label="Replication Condition" h="h-[32px]"><Pick id="v-repc" value="None" disabled /></Row>
          <button aria-label="Show advanced" className="mt-[3px] flex h-[17px] w-full items-center justify-center bg-[#474747] pr-5">
            <svg viewBox="0 0 13 9" className="h-[9px] w-[13px]" aria-hidden="true"><path d="M0 0h13v2L6.500 9 0 2z" fill="#ddd" /><path d="M0 2.500h13" stroke="#555" /></svg>
          </button>
        </section>
        <section className="mt-1 bg-[#3d3d3d]">
          <SectionHead title="Default Value" />
          <p className="h-[25px] pl-5 text-[15px] leading-[23px]">Please compile the blueprint</p>
        </section>
      </div>
      <span className="pointer-events-none absolute -left-1.5 top-[81px] h-[100px] w-[354px] rounded-[32px] border-[7px] border-[#ff0]" />
      <span className="pointer-events-none absolute -left-1.5 top-[190px] h-[98px] w-[352px] rounded-[32px] border-[7px] border-[#ff0]" />
      <span className="pointer-events-none absolute -left-[7px] top-[301px] h-[46px] w-[342px] rounded-[23px] border-[7px] border-[#ff0]" />
      <svg viewBox="0 0 24 24" className="absolute bottom-0 right-0 size-6" fill="none" aria-hidden="true">
        <circle cx="12" cy="12" r="10" fill="#333" stroke="#ddd" strokeWidth="2" />
        <path d="M12 5v7l4 3" stroke="#ddd" strokeWidth="2" />
        <path d="M4 21 21 4" stroke="#c21f1f" strokeWidth="3" />
      </svg>
    </aside>
  );
}

/* ---------- window ---------- */

function TitleBar() {
  return (
    <header className="flex h-[31px] items-end bg-[#3a3a3a] bg-[linear-gradient(to_bottom,rgba(90,90,90,.5),rgba(20,20,20,.6)),repeating-linear-gradient(125deg,#4d4d4d_0_26px,#3a3a3a_40px_66px,#4d4d4d_80px)]">
      <div className="flex w-[50px] self-center pl-0.5"><Logo /></div>
      <button className="flex h-[29px] w-[248px] items-center bg-linear-to-b from-[#5d5d5d] to-[#484848] pl-[25px] text-[#d4d4d4] [clip-path:polygon(14px_0,calc(100%-14px)_0,100%_100%,0_100%)] [text-shadow:1px_1px_1px_#000]">IntroToBlueprints2*</button>
      <div className="-ml-2.5 flex h-[29px] w-[256px] items-center gap-[7px] bg-linear-to-b from-[#8b8b8b] to-[#646464] pl-[15px] text-[#e8e8e8] [clip-path:polygon(14px_0,calc(100%-14px)_0,100%_100%,0_100%)] [text-shadow:1px_1px_1px_#000]">
        <BookIcon bg="#27477c" className="size-[21px]" />BP_Rotate_Around_Point
        <button aria-label="Close tab" className="text-[10px] text-[#444] [text-shadow:none]">✕</button>
      </div>
      <svg viewBox="0 0 20 18" className="mb-[7px] ml-auto h-[18px] w-5" aria-hidden="true">
        <path d="M1 5l10-4 8 4-9 6z" fill="#cfe0f4" /><path d="M5 9l5 3 7-4v5l-6 4-6-4z" fill="#5d8cc4" /><path d="M2 6v10" stroke="#bbb" />
      </svg>
      <div className="mr-[3px] ml-[15px] flex self-start">
        {[["Minimize", "w-[31px]", "M9 11h12v4H9z"], ["Restore", "w-[29px]", "M9 6h3V3h9v9h-3v3H9zM12 9v3h3V9z"], ["Close", "w-[52px]", ""]].map(([name, w, d]) => (
          <button key={name} aria-label={name} className={`flex h-5 items-center justify-center border border-t-0 border-[#7c7c7c] bg-linear-to-b from-[#333] to-[#5c5c5c] ${w}`}>
            <svg viewBox="0 0 30 19" className="h-[19px] w-[30px] shrink-0" aria-hidden="true">
              {d ? <path d={d} fill="#fff" fillRule="evenodd" /> : <path d="M10 5l10 10M20 5 10 15" stroke="#fff" strokeWidth="3.500" />}
            </svg>
          </button>
        ))}
      </div>
    </header>
  );
}

function MenuBar() {
  return (
    <nav className="flex h-[25px] items-center border-y border-black bg-linear-to-b from-[#262626] to-[#181818] pl-[13px] pr-[11px] text-[#dcdcdc]">
      <div className="flex gap-6">
        {["File", "Edit", "Asset", "View", "Debug", "Window", "Help"].map((m) => <button key={m}>{m}</button>)}
      </div>
      <span className="ml-auto text-[#858585]">Parent class:</span>
      <a href="#actor" className="ml-2 border-b border-dotted border-[#ddd] leading-[18px]">Actor</a>
    </nav>
  );
}

export default function App() {
  return (
    <div className="relative flex h-screen min-w-[1500px] flex-col overflow-hidden bg-[#222] font-[Roboto,sans-serif] text-base text-[#dedede]">
      <Defs />
      <TitleBar />
      <MenuBar />
      <main className="flex min-h-0 flex-1 pt-px">
        <div className="flex w-[288px] shrink-0 flex-col">
          <ComponentsPanel />
          <MyBlueprintPanel />
        </div>
        <div className="mx-1.5 flex min-w-0 flex-1 flex-col pb-[2px]">
          <Toolbar />
          <div role="tablist" className="mt-[6px] flex gap-[2px] pl-[5px]">
            <Tab active={false} h="h-[26px]" icon={<ViewportIcon />} label="Viewport" className="w-[187px]" />
            <Tab active={false} h="h-[26px]" icon={<FuncIcon />} label="Construction Script" className="w-[186px]" />
            <Tab h="h-[26px]" icon={<GridIcon className="h-4 w-[21px]" />} label="Event Graph" className="w-[188px]" />
          </div>
          <GraphCanvas />
          <FindResults />
        </div>
        <Details />
      </main>
      <div role="tooltip" className="absolute left-[216px] top-[890px] border-2 border-black bg-[#efefef] px-2.5 py-2.5 text-center text-black shadow-[1px_2px_3px_#000]">
        <p className="leading-5">Decides angle that actor starts with regarding center of rotation</p>
        <p className="mt-0.5 text-[15px] leading-5 text-[#666]">hold (Ctrl + Alt) for more</p>
      </div>
    </div>
  );
}
